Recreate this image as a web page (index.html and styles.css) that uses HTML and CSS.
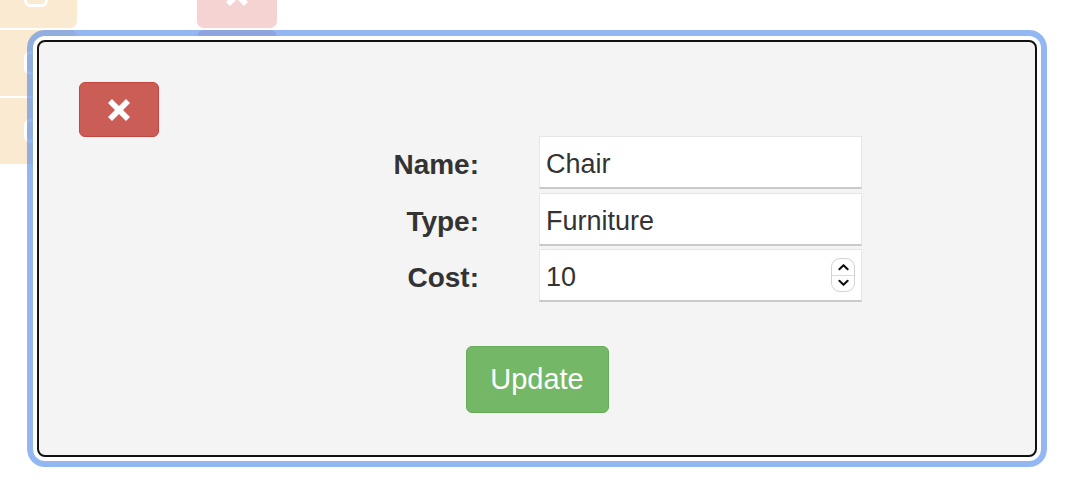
FILE: index.html
```html
<!DOCTYPE html>
<html>
<head>
<meta charset="utf-8">
<link rel="stylesheet" href="styles.css">
</head>
<body>
<div class="page">
  <div class="col col-edit">
    <div class="bg-btn warn"><svg class="edit-ico" viewBox="0 0 24 24"><rect x="1.5" y="1.5" width="21" height="21" rx="5" fill="none" stroke="#fff" stroke-width="3"/></svg></div>
    <div class="bg-btn warn"><svg class="edit-ico" viewBox="0 0 24 24"><rect x="1.5" y="1.5" width="21" height="21" rx="5" fill="none" stroke="#fff" stroke-width="3"/></svg></div>
    <div class="bg-btn warn"><svg class="edit-ico" viewBox="0 0 24 24"><rect x="1.5" y="1.5" width="21" height="21" rx="5" fill="none" stroke="#fff" stroke-width="3"/></svg></div>
  </div>
  <div class="col col-del">
    <div class="bg-btn dang"><svg class="x-ico" viewBox="0 0 22 22"><polygon fill="#fff" points="4,0 11,7 18,0 22,4 15,11 22,18 18,22 11,15 4,22 0,18 7,11 0,4"/></svg></div>
    <div class="bg-btn dang"><svg class="x-ico" viewBox="0 0 22 22"><polygon fill="#fff" points="4,0 11,7 18,0 22,4 15,11 22,18 18,22 11,15 4,22 0,18 7,11 0,4"/></svg></div>
  </div>
</div>

<div class="modal">
  <button class="close-btn" type="button"><svg class="x-ico" viewBox="0 0 22 22"><polygon fill="#fff" points="4,0 11,7 18,0 22,4 15,11 22,18 18,22 11,15 4,22 0,18 7,11 0,4"/></svg></button>
  <form class="form">
    <label class="lbl">Name:</label>
    <div class="field"><input class="inp" type="text" value="Chair"></div>
    <label class="lbl">Type:</label>
    <div class="field"><input class="inp" type="text" value="Furniture"></div>
    <label class="lbl">Cost:</label>
    <div class="field"><input class="inp" type="text" value="10">
      <span class="spin">
        <span class="spin-half"><svg viewBox="0 0 12 8"><polyline points="1.5,6.5 6,2 10.5,6.5" fill="none" stroke="#111" stroke-width="2.2" stroke-linecap="round" stroke-linejoin="round"/></svg></span>
        <span class="spin-half low"><svg viewBox="0 0 12 8"><polyline points="1.5,1.5 6,6 10.5,1.5" fill="none" stroke="#111" stroke-width="2.2" stroke-linecap="round" stroke-linejoin="round"/></svg></span>
      </span>
    </div>
  </form>
  <button class="update-btn" type="button">Update</button>
</div>
</body>
</html>
```

FILE: styles.css
```css
html, body {
  margin: 0;
  padding: 0;
  background: #fff;
  width: 1074px;
  height: 496px;
  overflow: hidden;
  font-family: "Liberation Sans", Arial, sans-serif;
}

.page {
  display: flex;
  gap: 120px;
  margin-top: -38px;
  opacity: 0.25;
}

.col {
  display: flex;
  flex-direction: column;
  gap: 2px;
}

.bg-btn {
  height: 66px;
  border-radius: 7px;
  display: flex;
  align-items: center;
  justify-content: center;
}

.warn {
  width: 77px;
  background: #f0ad4e;
  border-top-left-radius: 0;
  border-bottom-left-radius: 0;
}

.dang {
  width: 80px;
  background: #d9534f;
}

.edit-ico {
  width: 24px;
  height: 24px;
  margin-left: -6px;
}

.x-ico {
  width: 22px;
  height: 22px;
  display: block;
}

.modal {
  position: absolute;
  left: 37px;
  top: 40px;
  width: 1000px;
  height: 417px;
  box-sizing: border-box;
  border: 2px solid #111;
  border-radius: 8px;
  background: #f4f4f4;
  padding: 40px;
  box-shadow: 0 0 0 4px #fff, 0 0 0 10px rgba(59, 123, 232, 0.55);
}

.close-btn {
  display: flex;
  align-items: center;
  justify-content: center;
  width: 80px;
  height: 55px;
  padding: 0;
  background: #ca5d56;
  border: 1px solid #c4463f;
  border-radius: 6px;
}

.form {
  display: grid;
  grid-template-columns: 160px 323px;
  grid-auto-rows: 53px;
  column-gap: 60px;
  row-gap: 3.5px;
  margin: -1px 0 0 240px;
}

.lbl {
  align-self: center;
  padding-top: 5px;
  text-align: right;
  font-weight: bold;
  font-size: 28px;
  color: #333;
}

.field {
  display: flex;
  align-items: center;
  box-sizing: border-box;
  background: #fff;
  border: 1px solid #e6e6e6;
  border-bottom: 2px solid #c9c9c9;
}

.inp {
  flex: 1;
  min-width: 0;
  border: none;
  outline: none;
  background: transparent;
  padding: 5px 0 0 6px;
  margin: 0;
  font-family: "Liberation Sans", Arial, sans-serif;
  font-size: 27px;
  color: #333;
}

.spin {
  display: flex;
  flex-direction: column;
  width: 24px;
  height: 34px;
  box-sizing: border-box;
  margin-right: 6px;
  border: 1px solid #d2d2d2;
  border-radius: 9px;
  background: #fff;
  overflow: hidden;
}

.spin-half {
  flex: 1;
  display: flex;
  align-items: center;
  justify-content: center;
}

.spin-half.low {
  border-top: 1px solid #dcdcdc;
}

.spin-half svg {
  width: 11px;
  height: 8px;
}

.update-btn {
  display: block;
  width: 143px;
  height: 67px;
  margin: 44px auto 0;
  padding: 0;
  background: #73b767;
  border: 1px solid #66ad5a;
  border-radius: 6px;
  color: #fff;
  font-family: "Liberation Sans", Arial, sans-serif;
  font-size: 29px;
}
```
